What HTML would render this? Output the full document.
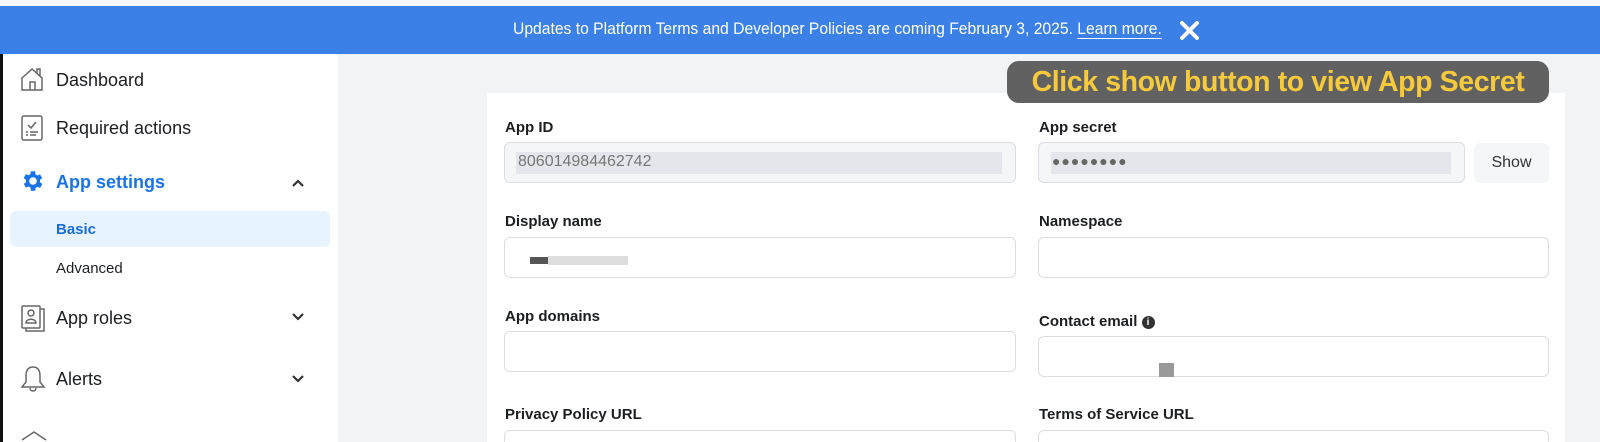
<!DOCTYPE html>
<html style="overflow:hidden"><head><style>
*{margin:0;padding:0;box-sizing:border-box}
html,body{width:1600px;height:442px;overflow:hidden}
#wrap{position:relative;width:1600px;height:442px;overflow:hidden;background:#f2f3f5;font-family:"Liberation Sans",Arial,sans-serif;color:#1c1e21}
.abs{position:absolute}
#top{left:0;top:0;width:1600px;height:6px;background:#f5f6f7}
#banner{left:0;top:6px;width:1600px;height:48px;background:#3a80e6;color:#fff}
#btext{left:513px;top:14px;font-size:16.5px;white-space:nowrap;transform:scaleX(0.95);transform-origin:left top}
#btext u{text-decoration:underline;text-underline-offset:4px}
#side{left:0;top:54px;width:338px;height:388px;background:#fff}
#edge{left:0;top:54px;width:3px;height:388px;background:#111}
.nav{position:absolute;left:56px;font-size:18px;color:#1c1e21}
.ico{position:absolute;left:20px}
.chev{position:absolute;left:291px}
#card{left:487px;top:93px;width:1078px;height:349px;background:#fff}
.lbl{position:absolute;font-size:15px;font-weight:bold;color:#1c1e21}
.inp{position:absolute;height:41px;border:1px solid #dadde1;border-radius:6px;background:#fff}
.bot{height:12px;border-bottom:none;border-radius:6px 6px 0 0}
.ro{background:#f5f6f7}
#callout{left:1007px;top:61px;width:542px;height:42px;background:#616161;border-radius:12px;color:#f7ca3b;font-weight:bold;font-size:28.5px;line-height:42px;text-align:center;letter-spacing:-0.4px;white-space:nowrap;overflow:hidden}
</style></head><body><div id="wrap">
<div id="top" class="abs"></div>
<div id="banner" class="abs">
  <div id="btext" class="abs">Updates to Platform Terms and Developer Policies are coming February 3, 2025. <u>Learn more.</u></div>
  <svg class="abs" style="left:1179px;top:14px" width="21" height="21" viewBox="0 0 21 21"><path d="M3 3L18 18M18 3L3 18" stroke="#fff" stroke-width="4" stroke-linecap="round"/></svg>
</div>
<div id="side" class="abs">
  <svg class="ico" style="top:12px" width="26" height="26" viewBox="0 0 26 26" fill="none" stroke="#666" stroke-width="1.5"><path d="M2 12L12 3L22 12V24H2Z"/><path d="M10 24V16H15V24"/><path d="M17 7V3H20V10"/></svg>
  <div class="nav" style="top:16px">Dashboard</div>
  <svg class="ico" style="top:60px" width="24" height="28" viewBox="0 0 24 28" fill="none" stroke="#666" stroke-width="1.5"><rect x="2" y="2" width="20" height="24" rx="2"/><path d="M8 11L11 14L16 8M6 18H8M10 18H18M6 21H8M10 21H16"/></svg>
  <div class="nav" style="top:64px">Required actions</div>
  <svg class="ico" style="top:114px" width="26" height="26" viewBox="0 0 24 24"><path fill="#1a73e8" d="M19.4 13a7.6 7.6 0 0 0 0-2l2.1-1.6-2-3.5-2.5 1a7.5 7.5 0 0 0-1.7-1L15 3h-4l-.4 2.7a7.5 7.5 0 0 0-1.7 1l-2.5-1-2 3.5L6.6 11a7.6 7.6 0 0 0 0 2l-2.1 1.6 2 3.5 2.5-1a7.5 7.5 0 0 0 1.7 1L11 21h4l.4-2.7a7.5 7.5 0 0 0 1.7-1l2.5 1 2-3.5zM13 15.5a3.5 3.5 0 1 1 0-7 3.5 3.5 0 0 1 0 7z" transform="translate(-1 0)"/></svg>
  <div class="nav" style="top:118px;color:#1a73e8;font-weight:bold">App settings</div>
  <svg class="chev" style="top:124px" width="14" height="10" viewBox="0 0 14 10"><path d="M2 8L7 3L12 8" stroke="#333" stroke-width="2.2" fill="none"/></svg>
  <div class="abs" style="left:10px;top:157px;width:320px;height:36px;background:#e7f3ff;border-radius:6px"></div>
  <div class="nav" style="top:167px;font-size:15px;font-weight:bold;color:#1a6dd6">Basic</div>
  <div class="nav" style="top:206px;font-size:15px">Advanced</div>
  <svg class="ico" style="top:250px" width="26" height="28" viewBox="0 0 26 28" fill="none" stroke="#666" stroke-width="1.5"><rect x="2" y="2" width="18" height="22" rx="1"/><path d="M20 5H24V27H6V24"/><circle cx="11" cy="9" r="3"/><path d="M6 19C6 14 16 14 16 19Z"/></svg>
  <div class="nav" style="top:254px">App roles</div>
  <svg class="chev" style="top:258px" width="14" height="10" viewBox="0 0 14 10"><path d="M2 2L7 7L12 2" stroke="#333" stroke-width="2.2" fill="none"/></svg>
  <svg class="ico" style="top:310px" width="26" height="30" viewBox="0 0 26 30" fill="none" stroke="#666" stroke-width="1.5"><path d="M13 3C7 3 6 8 6 12V18L2 23H24L20 18V12C20 8 19 3 13 3Z"/><path d="M10 24C10 28 16 28 16 24"/></svg>
  <div class="nav" style="top:315px">Alerts</div>
  <svg class="chev" style="top:320px" width="14" height="10" viewBox="0 0 14 10"><path d="M2 2L7 7L12 2" stroke="#333" stroke-width="2.2" fill="none"/></svg>
  <svg class="ico" style="top:374px" width="30" height="14" viewBox="0 0 30 14" fill="none" stroke="#666" stroke-width="1.5"><path d="M2 12L14 4L26 12"/></svg>
</div>
<div id="edge" class="abs"></div>
<div id="card" class="abs"></div>
<div class="lbl" style="left:505px;top:119px">App ID</div>
<div class="inp ro" style="left:504px;top:142px;width:512px"></div>
<div class="abs" style="left:516px;top:152px;width:486px;height:22px;background:#e4e6eb"></div>
<div class="abs" style="left:518px;top:153px;font-size:16px;color:#777">806014984462742</div>
<div class="lbl" style="left:505px;top:213px">Display name</div>
<div class="inp" style="left:504px;top:237px;width:512px"></div>
<div class="abs" style="left:530px;top:257px;width:18px;height:7px;background:#555"></div>
<div class="abs" style="left:548px;top:256px;width:80px;height:9px;background:#ddd"></div>
<div class="lbl" style="left:505px;top:308px">App domains</div>
<div class="inp" style="left:504px;top:331px;width:512px"></div>
<div class="lbl" style="left:505px;top:406px">Privacy Policy URL</div>
<div class="inp bot" style="left:504px;top:430px;width:512px"></div>

<div class="lbl" style="left:1039px;top:119px">App secret</div>
<div class="inp ro" style="left:1038px;top:142px;width:427px"></div>
<div class="abs" style="left:1051px;top:152px;width:400px;height:22px;background:#e4e6eb"></div>
<div class="abs" style="left:1052px;top:153px;font-size:14px;color:#666;letter-spacing:1px">●●●●●●●●</div>
<div class="abs" style="left:1474px;top:143px;width:75px;height:40px;background:#f5f6f7;border-radius:6px;font-size:16px;color:#333;text-align:center;line-height:40px">Show</div>
<div class="lbl" style="left:1039px;top:213px">Namespace</div>
<div class="inp" style="left:1038px;top:237px;width:511px"></div>
<div class="lbl" style="left:1039px;top:313px">Contact email <span style="display:inline-block;width:13px;height:13px;border-radius:50%;background:#333;color:#fff;font-size:10px;text-align:center;line-height:13px;vertical-align:1px">i</span></div>
<div class="inp" style="left:1038px;top:336px;width:511px"></div>
<div class="abs" style="left:1159px;top:363px;width:15px;height:14px;background:#999"></div>
<div class="lbl" style="left:1039px;top:406px">Terms of Service URL</div>
<div class="inp bot" style="left:1038px;top:430px;width:511px"></div>

<div id="callout" class="abs">Click show button to view App Secret</div>
</div></body></html>
